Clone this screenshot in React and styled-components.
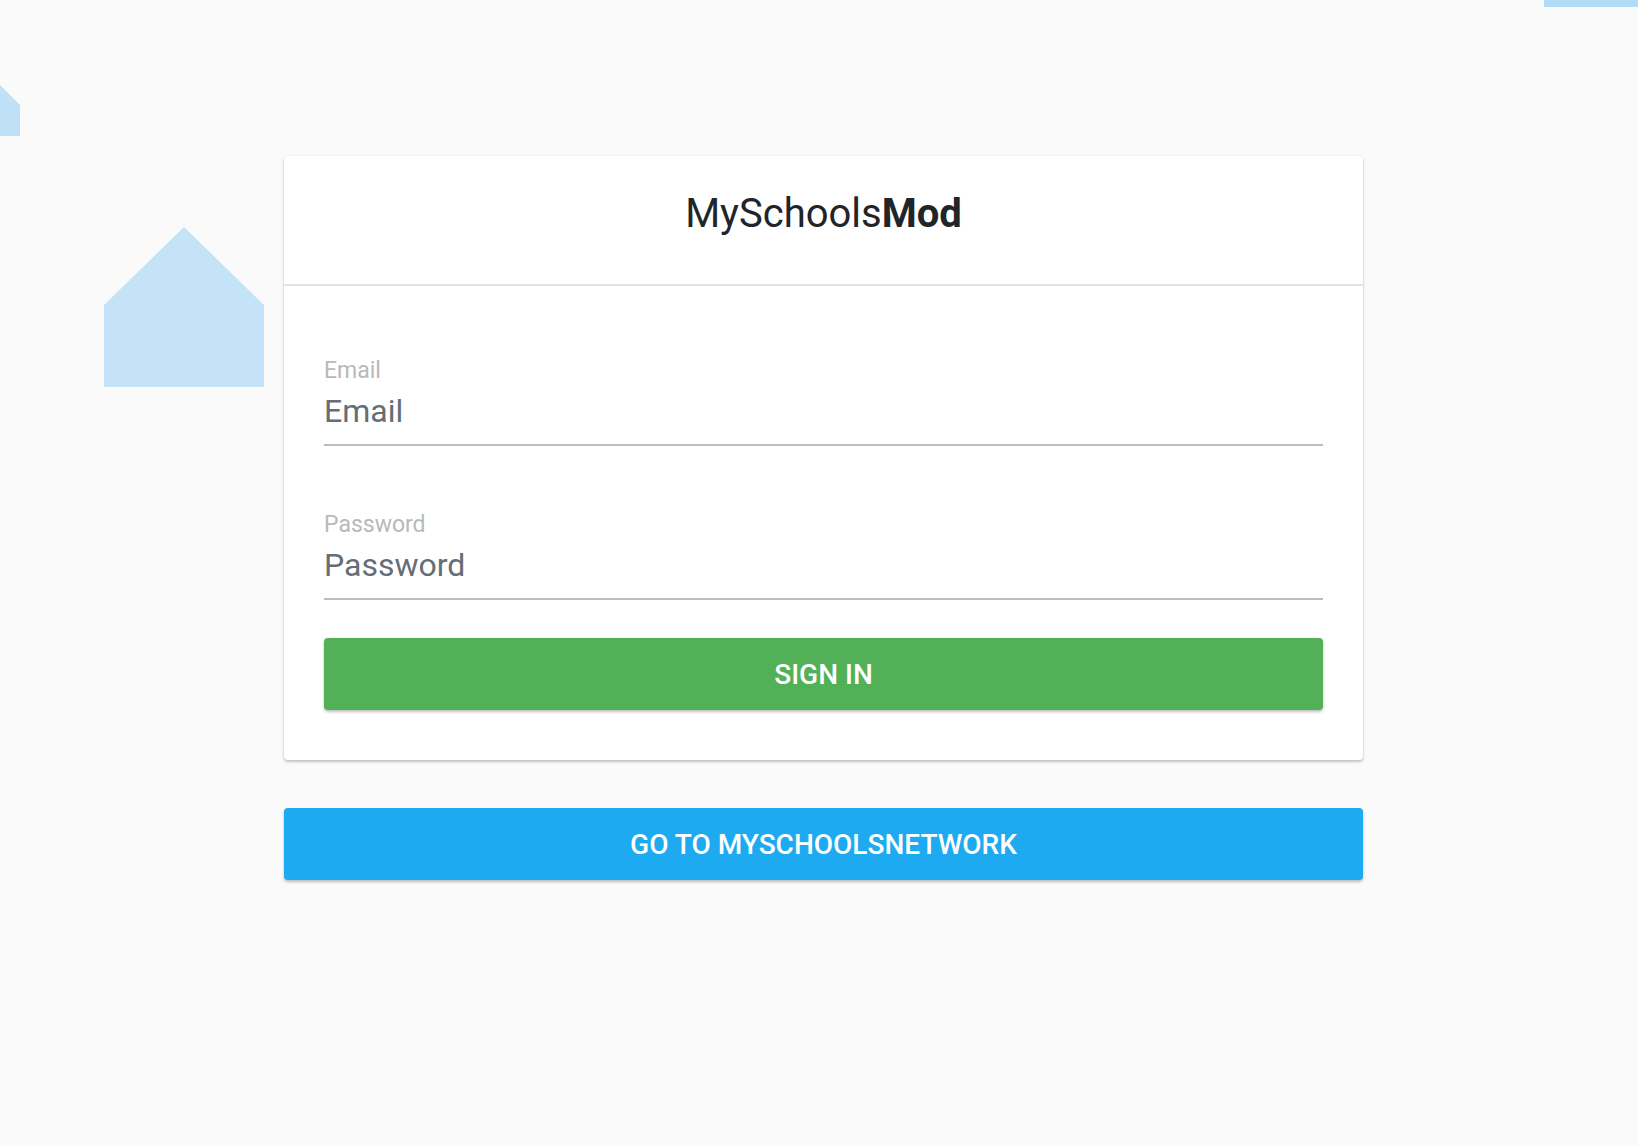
import styled, { createGlobalStyle } from 'styled-components';

const GlobalStyle = createGlobalStyle`
  html, body {
    margin: 0;
    padding: 0;
    background: #fafafa;
    font-family: Roboto, 'Liberation Sans', sans-serif;
  }
  * { box-sizing: border-box; }
`;

const Page = styled.div`
  position: relative;
  min-height: 1146px;
  padding: 156px 0 0 9px;
  display: flex;
  flex-direction: column;
  align-items: center;
  gap: 48px;
  overflow: hidden;
`;

const Decor = styled.svg`
  position: absolute;
  top: 0;
  left: 0;
  pointer-events: none;
`;

const Card = styled.div`
  width: 1079px;
  background: #fff;
  border-radius: 4px;
  box-shadow: 0 2px 3px rgba(0, 0, 0, 0.22), 0 0 3px rgba(0, 0, 0, 0.06);
  position: relative;
`;

const Header = styled.div`
  padding: 34px 0 47px;
  border-bottom: 2px solid #e3e3e3;
  text-align: center;
`;

const Title = styled.h1`
  margin: 0;
  font-size: 40px;
  font-weight: 400;
  color: #212529;
  line-height: 47px;

  b {
    font-weight: 700;
  }
`;

const Body = styled.form`
  padding: 71px 40px 50px;
  display: flex;
  flex-direction: column;
`;

const Field = styled.label`
  display: flex;
  flex-direction: column;
  margin-bottom: ${(p) => p.$gap}px;
`;

const Label = styled.span`
  font-size: 23px;
  line-height: 27px;
  color: #b9b9b9;
  margin-bottom: 9px;
`;

const Input = styled.input`
  border: none;
  border-bottom: 2px solid #bdbdbd;
  outline: none;
  padding: 0 0 14px;
  font-family: Roboto, 'Liberation Sans', sans-serif;
  font-size: 32px;
  line-height: 37px;
  color: #495057;
  background: transparent;

  &::placeholder {
    color: #656d76;
    opacity: 1;
  }
`;

const Button = styled.button`
  width: ${(p) => (p.$wide ? '1079px' : '100%')};
  height: 72px;
  border: none;
  border-radius: 4px;
  background: ${(p) => p.$color};
  color: #fff;
  font-family: Roboto, 'Liberation Sans', sans-serif;
  font-size: 28px;
  font-weight: 500;
  text-transform: uppercase;
  box-shadow: 0 2px 3px rgba(0, 0, 0, 0.25);
  cursor: pointer;
`;

export default function App() {
  return (
    <>
      <GlobalStyle />
      <Page>
        <Decor width="1638" height="400" viewBox="0 0 1638 400">
          <polygon points="0,85 20,105 20,136 0,136" fill="#bfe0f6" />
          <polygon points="104,305 184,227 264,305 264,387 104,387" fill="#c5e3f6" />
          <rect x="1544" y="0" width="94" height="7" fill="#b1dbf7" />
        </Decor>
        <Card>
          <Header>
            <Title>
              MySchools<b>Mod</b>
            </Title>
          </Header>
          <Body onSubmit={(e) => e.preventDefault()}>
            <Field $gap={65}>
              <Label>Email</Label>
              <Input type="email" placeholder="Email" />
            </Field>
            <Field $gap={38}>
              <Label>Password</Label>
              <Input type="password" placeholder="Password" />
            </Field>
            <Button type="submit" $color="#52b057">
              Sign in
            </Button>
          </Body>
        </Card>
        <Button $wide $color="#1eaaf1">
          Go to MySchoolsNetwork
        </Button>
      </Page>
    </>
  );
}
